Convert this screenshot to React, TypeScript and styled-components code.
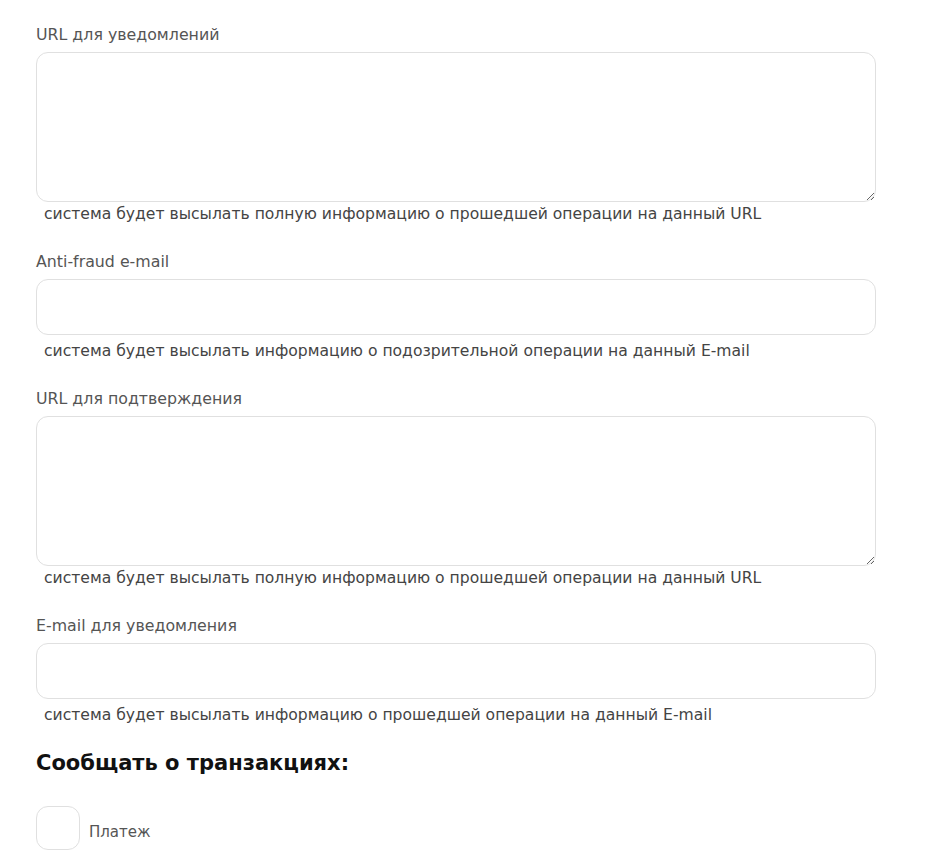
import React from 'react';
import styled, { createGlobalStyle } from 'styled-components';

const GlobalStyle = createGlobalStyle`
    body {
        margin: 0;
        background: #fff;
        font-family: "DejaVu Sans", "Open Sans", sans-serif;
    }
`;

const Page = styled.div`
    width: 840px;
    padding: 25px 0 0 36px;
`;

const Field = styled.div`
    display: flex;
    flex-direction: column;
    margin-bottom: 28px;
`;

const Label = styled.label`
    font-size: 15.8px;
    line-height: 20px;
    color: #555;
    margin-bottom: 7px;
`;

const TextArea = styled.textarea`
    box-sizing: border-box;
    width: 840px;
    height: 150px;
    border: 1px solid #e0e0e0;
    border-radius: 12px;
    outline: none;
    resize: vertical;
    display: block;
    font-family: inherit;
`;

const Input = styled.input`
    box-sizing: border-box;
    width: 840px;
    height: 56px;
    margin-bottom: 4px;
    border: 1px solid #e0e0e0;
    border-radius: 12px;
    outline: none;
    display: block;
`;

const Hint = styled.div`
    font-size: 15.6px;
    line-height: 20px;
    color: #444;
    padding: 2px 0 0 8px;
`;

const Heading = styled.h3`
    margin: -5px 0 28px;
    font-size: 21px;
    line-height: 30px;
    font-weight: 700;
    color: #111;
`;

const CheckRow = styled.label`
    display: flex;
    align-items: center;
    gap: 9px;
    font-size: 15px;
    color: #555;
`;

const Box = styled.span`
    box-sizing: border-box;
    width: 44px;
    height: 44px;
    border: 1px solid #e0e0e0;
    border-radius: 12px;
`;

const CheckText = styled.span`
    padding-top: 8px;
`;

interface FieldProps {
    label: string;
    hint: string;
    multiline?: boolean;
}

const FormField = ({ label, hint, multiline }: FieldProps) => (
    <Field>
        <Label>{label}</Label>
        {multiline ? <TextArea /> : <Input type="text" />}
        <Hint>{hint}</Hint>
    </Field>
);

export default function App() {
    return (
        <Page>
            <GlobalStyle />
            <FormField
                label="URL для уведомлений"
                hint="система будет высылать полную информацию о прошедшей операции на данный URL"
                multiline
            />
            <FormField
                label="Anti-fraud e-mail"
                hint="система будет высылать информацию о подозрительной операции на данный E-mail"
            />
            <FormField
                label="URL для подтверждения"
                hint="система будет высылать полную информацию о прошедшей операции на данный URL"
                multiline
            />
            <FormField
                label="E-mail для уведомления"
                hint="система будет высылать информацию о прошедшей операции на данный E-mail"
            />
            <Heading>Сообщать о транзакциях:</Heading>
            <CheckRow>
                <Box />
                <CheckText>Платеж</CheckText>
            </CheckRow>
        </Page>
    );
}
